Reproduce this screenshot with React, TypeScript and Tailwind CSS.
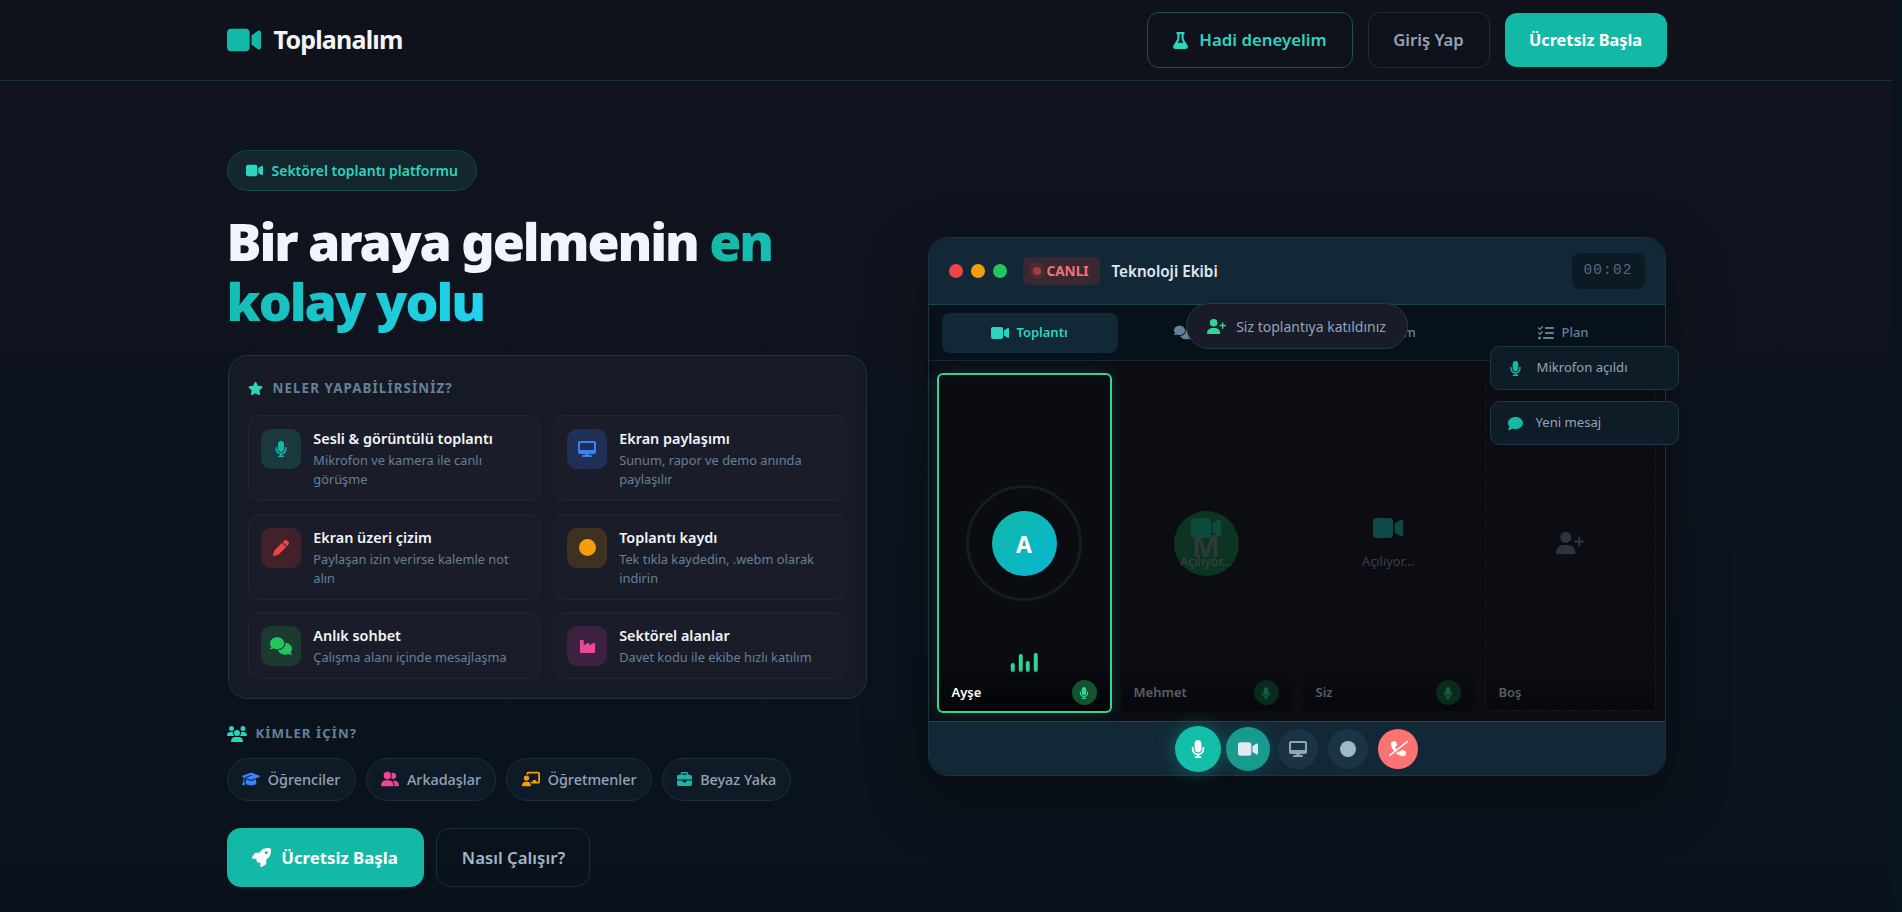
import {
  FaBriefcase,
  FaChalkboardUser,
  FaCircle,
  FaComment,
  FaComments,
  FaDesktop,
  FaFlask,
  FaGraduationCap,
  FaIndustry,
  FaListCheck,
  FaMicrophone,
  FaPen,
  FaPhoneSlash,
  FaRocket,
  FaStar,
  FaUserGroup,
  FaUserPlus,
  FaUsers,
  FaVideo,
} from 'react-icons/fa6';

const features = [
  {
    icon: <FaMicrophone size={16} className="text-[#14b8a6]" />,
    box: 'bg-[#1b3a3f]',
    title: 'Sesli & görüntülü toplantı',
    desc: 'Mikrofon ve kamera ile canlı görüşme',
  },
  {
    icon: <FaDesktop size={18} className="text-[#3b82f6]" />,
    box: 'bg-[#1f2f55]',
    title: 'Ekran paylaşımı',
    desc: 'Sunum, rapor ve demo anında paylaşılır',
  },
  {
    icon: <FaPen size={16} className="text-[#ef4444]" />,
    box: 'bg-[#43212b]',
    title: 'Ekran üzeri çizim',
    desc: 'Paylaşan izin verirse kalemle not alın',
  },
  {
    icon: <FaCircle size={17} className="text-[#f59e0b]" />,
    box: 'bg-[#3f3122]',
    title: 'Toplantı kaydı',
    desc: 'Tek tıkla kaydedin, .webm olarak indirin',
  },
  {
    icon: <FaComments size={22} className="text-[#22c55e]" />,
    box: 'bg-[#1b3a32]',
    title: 'Anlık sohbet',
    desc: 'Çalışma alanı içinde mesajlaşma',
  },
  {
    icon: <FaIndustry size={17} className="text-[#ec4899]" />,
    box: 'bg-[#3d2140]',
    title: 'Sektörel alanlar',
    desc: 'Davet kodu ile ekibe hızlı katılım',
  },
];

const audiences = [
  { icon: <FaGraduationCap size={18} className="text-[#3b82f6]" />, label: 'Öğrenciler' },
  { icon: <FaUserGroup size={18} className="text-[#ec4899]" />, label: 'Arkadaşlar' },
  { icon: <FaChalkboardUser size={18} className="text-[#f59e0b]" />, label: 'Öğretmenler' },
  { icon: <FaBriefcase size={15} className="text-[#14b8a6]" />, label: 'Beyaz Yaka' },
];

const tabs = [
  { icon: <FaComments size={17} />, label: 'Sohbet' },
  { icon: <FaUsers size={17} />, label: 'Takım' },
  { icon: <FaListCheck size={16} />, label: 'Plan' },
];

function TileLabel({ name, dim }: { name: string; dim?: boolean }) {
  return (
    <div
      className={`absolute inset-x-0 bottom-0 flex items-center justify-between rounded-b-[5px] bg-gradient-to-t to-transparent px-[13px] pb-[6px] pt-[14px] ${
        dim ? 'from-black/40' : 'from-black/70'
      }`}
    >
      <span className={`text-[13px] font-semibold ${dim ? 'text-[#5a5d63]' : 'text-white'}`}>{name}</span>
      <span
        className={`flex h-[25px] w-[25px] items-center justify-center rounded-full ${
          dim ? 'bg-[#0b2a1e]' : 'bg-[#14532d]'
        }`}
      >
        <FaMicrophone size={12} className={dim ? 'text-[#15603f]' : 'text-[#34d399]'} />
      </span>
    </div>
  );
}

export default function App() {
  return (
    <div className="flex h-[912px] overflow-hidden bg-[#08131b] font-['Noto_Sans',sans-serif]">
      <div className="flex w-[1893px] flex-col bg-gradient-to-b from-[#11141f] to-[#09121b]">
        <header className="h-[81px] border-b border-[#1a3036] bg-[#10121b]">
          <div className="mx-auto flex h-[80px] w-[1440px] items-center justify-between">
            <div className="flex items-center gap-[13px]">
              <FaVideo size={34} className="text-[#14b8a6]" />
              <span className="text-[25px] font-bold tracking-[-0.8px] text-[#f1f5f9]">Toplanalım</span>
            </div>
            <div className="flex items-center gap-[15px]">
              <button className="flex h-[56px] w-[206px] items-center justify-center gap-[10px] rounded-[12px] border border-[#14524e] text-[16.8px] font-semibold text-[#2dd4bf]">
                <FaFlask size={17} />
                Hadi deneyelim
              </button>
              <button className="h-[56px] w-[122px] rounded-[12px] border border-[#1a2e35] text-[16.6px] font-semibold text-[#94a3b8]">
                Giriş Yap
              </button>
              <button className="h-[54px] w-[162px] rounded-[12px] bg-[#14b8a6] text-[16.3px] font-bold text-white">
                Ücretsiz Başla
              </button>
            </div>
          </div>
        </header>

        <main className="mx-auto flex w-[1440px] items-start justify-between">
          <div className="w-[640px] pt-[69px]">
            <div className="inline-flex h-[41px] items-center gap-[9px] rounded-full border border-[#134840] bg-[#14262e] px-[18px] text-[14px] font-semibold text-[#2dd4bf]">
              <FaVideo size={17} />
              Sektörel toplantı platformu
            </div>
            <h1 className="mt-[20px] w-[600px] text-[52px] font-black leading-[60px] tracking-[-0.04em] text-[#f1f5f9]">
              Bir araya gelmenin{' '}
              <span className="bg-gradient-to-r from-[#14b8a6] to-[#22d3ee] bg-clip-text text-transparent">
                en kolay yolu
              </span>
            </h1>

            <section className="ml-[1px] mt-[24px] rounded-[20px] border border-[#1e363e] bg-[#161a25] p-[19px]">
              <div className="flex items-center gap-[10px] pb-[17px] pt-[3px]">
                <FaStar size={15} className="text-[#2dd4bf]" />
                <span className="text-[13.4px] font-bold uppercase tracking-[0.08em] text-[#64809a]">
                  NELER YAPABİLİRSİNİZ?
                </span>
              </div>
              <div className="grid grid-cols-2 gap-[12.8px]">
                {features.map((f) => (
                  <div
                    key={f.title}
                    className="flex gap-[12px] rounded-[12px] border border-[#222632] bg-[#1a1d29] px-[12.8px] pb-[10.6px] pt-[12.8px]"
                  >
                    <div className={`flex h-[40px] w-[40px] shrink-0 items-center justify-center rounded-[10px] ${f.box}`}>
                      {f.icon}
                    </div>
                    <div className="min-w-0">
                      <div className="text-[14.4px] font-semibold leading-[20px] text-[#f1f5f9]">{f.title}</div>
                      <div className="mt-[2px] text-[12.8px] leading-[19.2px] text-[#64809a]">{f.desc}</div>
                    </div>
                  </div>
                ))}
              </div>
            </section>

            <div className="mt-[25px] flex items-center gap-[9px]">
              <FaUsers size={20} className="text-[#2dd4bf]" />
              <span className="text-[13.2px] font-bold tracking-[0.08em] text-[#64809a]">KİMLER İÇİN?</span>
            </div>
            <div className="mt-[14px] flex gap-[10px]">
              {audiences.map((a) => (
                <span
                  key={a.label}
                  className="flex h-[43px] items-center gap-[8px] rounded-full border border-[#1a3038] bg-[#0e1b27] px-[14.3px] text-[14.4px] font-medium text-[#94a3b8]"
                >
                  {a.icon}
                  {a.label}
                </span>
              ))}
            </div>
            <div className="mt-[27px] flex gap-[12px]">
              <button className="flex h-[59px] w-[197px] items-center justify-center gap-[10px] rounded-[14px] bg-[#14b8a6] text-[16.8px] font-bold text-white">
                <FaRocket size={19} />
                Ücretsiz Başla
              </button>
              <button className="h-[59px] w-[154px] rounded-[14px] border border-[#1a2e35] pl-[2px] text-[16.8px] font-semibold text-[#a3b5c9]">
                Nasıl Çalışır?
              </button>
            </div>
          </div>

          <div className="relative mr-[1px] mt-[156px] w-[738px] rounded-[20px] border border-[#1c3540] bg-[#0b0d13] shadow-[0_20px_60px_rgba(0,0,0,0.35)]">
            <div className="flex h-[67px] items-center rounded-t-[20px] border-b border-[#1d4250] bg-[#132836] pl-[20px] pr-[20px]">
              <div className="flex gap-[8px]">
                <span className="h-[14px] w-[14px] rounded-full bg-[#ef4444]" />
                <span className="h-[14px] w-[14px] rounded-full bg-[#f59e0b]" />
                <span className="h-[14px] w-[14px] rounded-full bg-[#22c55e]" />
              </div>
              <div className="ml-[16px] flex h-[28px] w-[77px] items-center justify-center gap-[5px] rounded-[6px] bg-[#382832] text-[13.6px] font-bold text-[#f87171]">
                <span className="h-[8px] w-[8px] rounded-full bg-[#a63a40] shadow-[0_0_0_4px_rgba(239,68,68,0.12)]" />
                CANLI
              </div>
              <span className="ml-[12px] text-[15.2px] font-semibold text-[#e2e8f0]">Teknoloji Ekibi</span>
              <span className="ml-auto flex h-[36px] w-[73px] items-center justify-center rounded-[8px] bg-[#0b1a24] font-['Liberation_Mono',monospace] text-[14.4px] tracking-[0.08em] text-[#56687c]">
                00:02
              </span>
            </div>

            <div className="flex h-[56px] items-center gap-[2px] border-b border-[#142a33] bg-[#07111a] px-[13px]">
              <div className="flex h-[40px] w-[176px] items-center justify-center gap-[7px] rounded-[8px] bg-[#132836] text-[13px] font-semibold text-[#2dd4bf]">
                <FaVideo size={18} />
                Toplantı
              </div>
              {tabs.map((t) => (
                <div
                  key={t.label}
                  className="flex h-[40px] w-[176px] items-center justify-center gap-[7px] text-[13px] font-medium text-[#64809a]"
                >
                  {t.icon}
                  {t.label}
                </div>
              ))}
            </div>

            <div className="grid h-[360px] grid-cols-4 gap-[11px] bg-[#0b0d13] pb-[10px] pl-[10px] pr-[9px] pt-[14px]">
              <div className="relative -mx-[2px] -my-[2px] flex items-center justify-center rounded-[6px] border-2 border-[#34d399] bg-[#0a0c12] shadow-[0_0_18px_rgba(52,211,153,0.15)]">
                <span className="flex h-[116px] w-[116px] items-center justify-center rounded-full border-[3px] border-[#0f2023]">
                  <span className="flex h-[65px] w-[65px] items-center justify-center rounded-full bg-gradient-to-br from-[#14b8a6] to-[#06b6d4] pt-[3px] text-[23px] font-bold text-white">
                    A
                  </span>
                </span>
                <div className="absolute bottom-[39px] left-1/2 flex -translate-x-1/2 items-end gap-[3.5px]">
                  <span className="h-[9px] w-[4px] rounded-full bg-[#34d399]" />
                  <span className="h-[18px] w-[4px] rounded-full bg-[#34d399]" />
                  <span className="h-[11px] w-[4px] rounded-full bg-[#34d399]" />
                  <span className="h-[19px] w-[4px] rounded-full bg-[#34d399]" />
                </div>
                <TileLabel name="Ayşe" />
              </div>

              <div className="relative flex items-center justify-center rounded-[6px] bg-[#0b0d13]">
                <span className="flex h-[65px] w-[65px] items-center justify-center rounded-full bg-[#0d3322] pt-[5px] text-[30px] font-bold text-[#2e3a36]">
                  M
                </span>
                <div className="absolute inset-0 flex flex-col items-center justify-center gap-[9px] pb-[2px]">
                  <FaVideo size={30} className="text-[#0f4a3e]" />
                  <span className="text-[12.8px] text-[#39443f]">Açılıyor...</span>
                </div>
                <TileLabel name="Mehmet" dim />
              </div>

              <div className="relative flex flex-col items-center justify-center gap-[9px] rounded-[6px] bg-[#0b0d13] pb-[2px]">
                <FaVideo size={30} className="text-[#0f4a46]" />
                <span className="text-[12.8px] text-[#3a414d]">Açılıyor...</span>
                <TileLabel name="Siz" dim />
              </div>

              <div className="relative flex items-center justify-center rounded-[6px] border border-dashed border-[#181c24] bg-[#0b0d13]">
                <FaUserPlus size={28} className="text-[#2a3540]" />
                <div className="absolute inset-x-0 bottom-0 bg-gradient-to-t from-black/40 to-transparent px-[13px] pb-[8px] pt-[12px] text-[13px] font-semibold text-[#5a5d63]">
                  Boş
                </div>
              </div>
            </div>

            <div className="flex h-[54px] items-center justify-center gap-[10px] rounded-b-[20px] border-t border-[#1d4250] bg-[#132836]">
              <button className="flex h-[46px] w-[46px] items-center justify-center rounded-full bg-[#14bfa9] text-white shadow-[0_0_20px_rgba(20,184,166,0.4)]">
                <FaMicrophone size={18} />
              </button>
              <button className="-ml-[5px] flex h-[44px] w-[44px] items-center justify-center rounded-full bg-[#179b8e] text-[#e2e8f0] shadow-[0_0_14px_rgba(20,184,166,0.2)]">
                <FaVideo size={20} />
              </button>
              <button className="-ml-[2px] flex h-[40px] w-[40px] items-center justify-center rounded-full bg-[#1a3445] text-[#94a3b8]">
                <FaDesktop size={18} />
              </button>
              <button className="flex h-[40px] w-[40px] items-center justify-center rounded-full bg-[#1a3445] text-[#a0b8c8]">
                <FaCircle size={16} />
              </button>
              <button className="flex h-[40px] w-[40px] items-center justify-center rounded-full bg-[#fb7373] text-white">
                <FaPhoneSlash size={19} />
              </button>
            </div>

            <div className="absolute left-[257px] top-[65px] flex h-[46px] w-[222px] items-center justify-center gap-[10px] rounded-full border border-[#243c42] bg-[#181c28] text-[14px] text-[#94a3b8]">
              <FaUserPlus size={19} className="text-[#34d399]" />
              Siz toplantıya katıldınız
            </div>
            <div className="absolute left-[561px] top-[108px] flex h-[44px] w-[189px] items-center gap-[14px] rounded-[10px] border border-[#1c3a44] bg-[#0e1c28] pl-[17px] text-[13.1px] text-[#94a3b8]">
              <FaMicrophone size={15} className="text-[#14b8a6]" />
              Mikrofon açıldı
            </div>
            <div className="absolute left-[561px] top-[163px] flex h-[44px] w-[189px] items-center gap-[13px] rounded-[10px] border border-[#1c3a44] bg-[#0e1c28] pl-[17px] text-[13.1px] text-[#94a3b8]">
              <FaComment size={15} className="text-[#14b8a6]" />
              Yeni mesaj
            </div>
          </div>
        </main>
      </div>
      <div className="w-[9px] bg-[#08131b]" />
    </div>
  );
}
